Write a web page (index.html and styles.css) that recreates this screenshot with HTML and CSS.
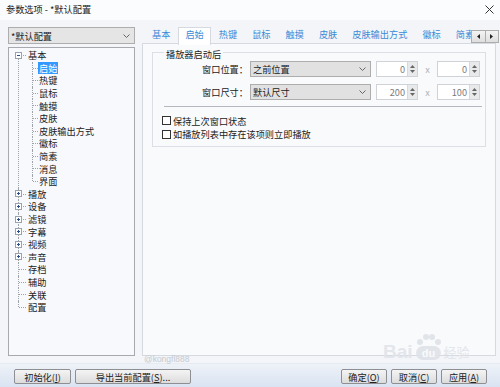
FILE: index.html
```html
<!DOCTYPE html>
<html>
  <head>
  <meta charset='UTF-8'>
  <title>参数选项</title>
    <link rel="stylesheet" href="styles.css">
  </head>
  <body>
    <div class="window">
      <div class="titlebar">
        <span class="title">参数选项 - *默认配置</span>
        <svg class="close" width="9" height="9" viewBox="0 0 9 9"><path d="M0.5 0.5L8.5 8.5M8.5 0.5L0.5 8.5" stroke="#333" stroke-width="1"/></svg>
      </div>

      <div class="main">
        <div class="side">
          <div class="combo">
            <span>*默认配置</span>
            <svg width="7" height="4" viewBox="0 0 7 4"><path d="M0.5 0.5L3.5 3.5L6.5 0.5" fill="none" stroke="#666"/></svg>
          </div>
          <div class="tree">
            <ul>
              <li class="root">
                <div class="row">
                  <svg class="twist" width="7" height="7" viewBox="0 0 7 7"><rect x="0.5" y="0.5" width="6" height="6" fill="#fff" stroke="#9aa2ac"/><path d="M2 3.5h3" stroke="#2d4f8e"/></svg>
                  <span class="label">基本</span>
                </div>
                <ul class="sub">
                  <li><div class="row"><span class="label sel">启始</span></div></li>
                  <li><div class="row"><span class="label">热键</span></div></li>
                  <li><div class="row"><span class="label">鼠标</span></div></li>
                  <li><div class="row"><span class="label">触摸</span></div></li>
                  <li><div class="row"><span class="label">皮肤</span></div></li>
                  <li><div class="row"><span class="label">皮肤输出方式</span></div></li>
                  <li><div class="row"><span class="label">徽标</span></div></li>
                  <li><div class="row"><span class="label">简素</span></div></li>
                  <li><div class="row"><span class="label">消息</span></div></li>
                  <li><div class="row"><span class="label">界面</span></div></li>
                </ul>
              </li>
              <li class="root"><div class="row"><svg class="twist" width="7" height="7" viewBox="0 0 7 7"><rect x="0.5" y="0.5" width="6" height="6" fill="#fff" stroke="#9aa2ac"/><path d="M2 3.5h3M3.5 2v3" stroke="#2d4f8e"/></svg><span class="label">播放</span></div></li>
              <li class="root"><div class="row"><svg class="twist" width="7" height="7" viewBox="0 0 7 7"><rect x="0.5" y="0.5" width="6" height="6" fill="#fff" stroke="#9aa2ac"/><path d="M2 3.5h3M3.5 2v3" stroke="#2d4f8e"/></svg><span class="label">设备</span></div></li>
              <li class="root"><div class="row"><svg class="twist" width="7" height="7" viewBox="0 0 7 7"><rect x="0.5" y="0.5" width="6" height="6" fill="#fff" stroke="#9aa2ac"/><path d="M2 3.5h3M3.5 2v3" stroke="#2d4f8e"/></svg><span class="label">滤镜</span></div></li>
              <li class="root"><div class="row"><svg class="twist" width="7" height="7" viewBox="0 0 7 7"><rect x="0.5" y="0.5" width="6" height="6" fill="#fff" stroke="#9aa2ac"/><path d="M2 3.5h3M3.5 2v3" stroke="#2d4f8e"/></svg><span class="label">字幕</span></div></li>
              <li class="root"><div class="row"><svg class="twist" width="7" height="7" viewBox="0 0 7 7"><rect x="0.5" y="0.5" width="6" height="6" fill="#fff" stroke="#9aa2ac"/><path d="M2 3.5h3M3.5 2v3" stroke="#2d4f8e"/></svg><span class="label">视频</span></div></li>
              <li class="root"><div class="row"><svg class="twist" width="7" height="7" viewBox="0 0 7 7"><rect x="0.5" y="0.5" width="6" height="6" fill="#fff" stroke="#9aa2ac"/><path d="M2 3.5h3M3.5 2v3" stroke="#2d4f8e"/></svg><span class="label">声音</span></div></li>
              <li class="root"><div class="row"><span class="twist"></span><span class="label">存档</span></div></li>
              <li class="root"><div class="row"><span class="twist"></span><span class="label">辅助</span></div></li>
              <li class="root"><div class="row"><span class="twist"></span><span class="label">关联</span></div></li>
              <li class="root"><div class="row"><span class="twist"></span><span class="label">配置</span></div></li>
            </ul>
          </div>
        </div>

        <div class="content">
          <div class="tabbar">
            <div class="tabs">
              <span class="tab">基本</span>
              <span class="tab active">启始</span>
              <span class="tab">热键</span>
              <span class="tab">鼠标</span>
              <span class="tab">触摸</span>
              <span class="tab">皮肤</span>
              <span class="tab">皮肤输出方式</span>
              <span class="tab">徽标</span>
              <span class="tab">简素</span>
            </div>
            <div class="tab-scroll">
              <span class="arrow"><svg width="3" height="5" viewBox="0 0 3 5"><path d="M3 0V5L0 2.5Z" fill="#222"/></svg></span>
              <span class="arrow"><svg width="3" height="5" viewBox="0 0 3 5"><path d="M0 0V5L3 2.5Z" fill="#222"/></svg></span>
            </div>
          </div>

          <div class="panel">
            <fieldset class="group">
              <legend>播放器启动后</legend>
              <div class="field-row">
                <span class="field-label">窗口位置：</span>
                <div class="select">
                  <span>之前位置</span>
                  <svg width="7" height="4" viewBox="0 0 7 4"><path d="M0.5 0.5L3.5 3.5L6.5 0.5" fill="none" stroke="#666"/></svg>
                </div>
                <div class="spin"><span class="spin-value">0</span><span class="spin-btns"><svg width="5" height="3" viewBox="0 0 5 3"><path d="M0 3H5L2.5 0Z" fill="#666"/></svg><svg width="5" height="3" viewBox="0 0 5 3"><path d="M0 0H5L2.5 3Z" fill="#666"/></svg></span></div>
                <span class="times">x</span>
                <div class="spin wide"><span class="spin-value">0</span><span class="spin-btns"><svg width="5" height="3" viewBox="0 0 5 3"><path d="M0 3H5L2.5 0Z" fill="#666"/></svg><svg width="5" height="3" viewBox="0 0 5 3"><path d="M0 0H5L2.5 3Z" fill="#666"/></svg></span></div>
              </div>
              <div class="field-row">
                <span class="field-label">窗口尺寸：</span>
                <div class="select">
                  <span>默认尺寸</span>
                  <svg width="7" height="4" viewBox="0 0 7 4"><path d="M0.5 0.5L3.5 3.5L6.5 0.5" fill="none" stroke="#666"/></svg>
                </div>
                <div class="spin"><span class="spin-value">200</span><span class="spin-btns"><svg width="5" height="3" viewBox="0 0 5 3"><path d="M0 3H5L2.5 0Z" fill="#666"/></svg><svg width="5" height="3" viewBox="0 0 5 3"><path d="M0 0H5L2.5 3Z" fill="#666"/></svg></span></div>
                <span class="times">x</span>
                <div class="spin wide"><span class="spin-value">100</span><span class="spin-btns"><svg width="5" height="3" viewBox="0 0 5 3"><path d="M0 3H5L2.5 0Z" fill="#666"/></svg><svg width="5" height="3" viewBox="0 0 5 3"><path d="M0 0H5L2.5 3Z" fill="#666"/></svg></span></div>
              </div>
              <div class="sep"></div>
              <label class="check"><span class="box"></span>保持上次窗口状态</label>
              <label class="check"><span class="box"></span>如播放列表中存在该项则立即播放</label>
            </fieldset>
          </div>
        </div>
      </div>

      <div class="footer">
        <div class="btns">
          <span class="btn init">初始化(<u>I</u>)</span>
          <span class="btn export">导出当前配置(<u>S</u>)...</span>
        </div>
        <div class="btns">
          <span class="btn ok">确定(<u>O</u>)</span>
          <span class="btn ok">取消(<u>C</u>)</span>
          <span class="btn ok">应用(<u>A</u>)</span>
        </div>
      </div>

      <span class="credit">@kongfl888</span>
      <div class="baidu">
        <span class="bai">Bai</span>
        <span class="paw">
          <svg width="30" height="30" viewBox="0 0 30 30">
            <circle cx="7" cy="10" r="3" fill="#dfe3e9"/>
            <circle cx="13" cy="5" r="3" fill="#dfe3e9"/>
            <circle cx="19" cy="5" r="3" fill="#dfe3e9"/>
            <circle cx="25" cy="10" r="3" fill="#dfe3e9"/>
            <rect x="3" y="14" width="25" height="14" rx="7" fill="#dfe3e9"/>
            <text x="15.5" y="25" font-size="11" font-weight="bold" font-family="Liberation Sans, sans-serif" fill="#fafbfd" text-anchor="middle">du</text>
          </svg>
        </span>
        <span class="jy">经验</span>
      </div>
    </div>
  </body>
</html>
```

FILE: styles.css
```css
* {
  box-sizing: border-box;
}
html, body {
  margin: 0;
  padding: 0;
}
body {
  width: 500px;
  height: 387px;
  overflow: hidden;
  font-family: "Noto Sans CJK SC", "Liberation Sans", sans-serif;
  font-size: 9.2px;
  color: #222;
  background: #f3f5f9;
}
.window {
  position: relative;
  width: 500px;
  height: 387px;
  display: flex;
  flex-direction: column;
}
.titlebar {
  height: 20px;
  display: flex;
  align-items: center;
  justify-content: space-between;
  padding: 0 6px 2px 6px;
  background: #fbfcfd;
}
.title {
  line-height: 12px;
}
.main {
  height: 343px;
  display: flex;
  gap: 7px;
  padding: 7px 1px 7px 8px;
}

/* left side */
.side {
  flex: none;
  width: 127px;
  display: flex;
  flex-direction: column;
}
.combo {
  height: 17px;
  border: 1px solid #adadad;
  background: #e5e5e5;
  display: flex;
  align-items: center;
  justify-content: space-between;
  padding: 0 4px 0 2px;
  line-height: 12px;
  margin-bottom: 3px;
}
.tree {
  flex: 1;
  border: 1px solid #a7a9ae;
  background: #f8f9fc;
  padding-top: 1px;
}
.tree ul {
  list-style: none;
  margin: 0;
  padding: 0;
}
.tree li {
  position: relative;
}
.tree .row {
  position: relative;
  display: flex;
  align-items: center;
  height: 12.6px;
  line-height: 12px;
  white-space: nowrap;
}
.root > .row {
  padding-left: 6px;
}
.root > .row::after {
  content: "";
  position: absolute;
  left: 10px;
  top: 6px;
  width: 7px;
  border-top: 1px dotted #9ea3aa;
}
.root::before {
  content: "";
  position: absolute;
  left: 9px;
  top: 0;
  bottom: 0;
  border-left: 1px dotted #9ea3aa;
}
.root:first-child::before {
  top: 6px;
}
.root:last-child::before {
  bottom: auto;
  height: 6px;
}
.twist {
  position: relative;
  z-index: 1;
  display: inline-block;
  width: 7px;
  height: 7px;
  margin-right: 5px;
  flex: none;
}
.sub > li::before {
  content: "";
  position: absolute;
  left: 23px;
  top: 0;
  bottom: 0;
  border-left: 1px dotted #9ea3aa;
}
.sub > li:last-child::before {
  bottom: auto;
  height: 6px;
}
.sub .row {
  padding-left: 29px;
}
.sub .row::after {
  content: "";
  position: absolute;
  left: 24px;
  top: 6px;
  width: 5px;
  border-top: 1px dotted #9ea3aa;
}
.label {
  padding: 0 1px;
}
.sel {
  background: #3399ff;
  color: #fff;
}

/* right side */
.content {
  flex: 1;
  min-width: 0;
  display: flex;
  flex-direction: column;
}
.tabbar {
  height: 16px;
  display: flex;
  align-items: flex-end;
}
.tabs {
  flex: 1;
  min-width: 0;
  display: flex;
  align-items: flex-end;
  overflow: hidden;
  padding-left: 2.5px;
  height: 18px;
  margin-bottom: -2px;
  position: relative;
  z-index: 1;
}
.tab {
  flex: none;
  padding: 0 7.5px;
  height: 16px;
  line-height: 10px;
  color: #3b8ad6;
  white-space: nowrap;
}
.tab.active {
  background: #fff;
  border: 1px solid #d6d9df;
  border-bottom: none;
  padding: 1px 6.5px 0;
  height: 18px;
}
.tab-scroll {
  flex: none;
  display: flex;
  width: 28px;
  height: 13px;
  align-self: flex-end;
}
.arrow {
  flex: 1;
  display: flex;
  align-items: center;
  justify-content: center;
  border: 1px solid #adadad;
  background: linear-gradient(#f4f4f4, #dedede);
}
.arrow + .arrow {
  border-left: none;
}
.panel {
  flex: 1;
  margin-right: 3px;
  border: 1px solid #d6d9df;
  background: #f9fafc;
  padding: 1px 9px 0 9px;
}
.group {
  margin: 0;
  border: 1px solid #dcdfe5;
  padding: 1px 2px 5px 9px;
  min-width: 0;
}
.group legend {
  padding: 3px 2px 0;
  margin-left: 2px;
  line-height: 12px;
}
.field-row {
  display: flex;
  align-items: center;
  height: 16px;
  margin-bottom: 7px;
}
.field-label {
  flex: none;
  width: 86px;
  text-align: right;
  line-height: 12px;
}
.select {
  flex: none;
  width: 121px;
  height: 16px;
  margin-left: 2px;
  border: 1px solid #adadad;
  background: #e1e1e1;
  display: flex;
  align-items: center;
  justify-content: space-between;
  padding: 0 4px 0 2px;
  line-height: 12px;
}
.spin {
  flex: none;
  width: 42px;
  height: 16px;
  margin-left: 5px;
  border: 1px solid #cfd2d7;
  background: #fff;
  display: flex;
}
.spin.wide {
  width: 43px;
  margin-left: 0;
}
.spin-value {
  flex: 1;
  text-align: right;
  padding-right: 2px;
  line-height: 14px;
  color: #7b7b7b;
}
.spin-btns {
  width: 10px;
  display: flex;
  flex-direction: column;
  align-items: center;
  justify-content: space-around;
  padding: 2px 0;
  background: #e8e9eb;
  border-left: 1px solid #d7d9dc;
}
.times {
  flex: none;
  width: 19px;
  text-align: center;
  color: #b0b3b8;
  line-height: 12px;
}
.sep {
  height: 1px;
  background: #b4b7bd;
  margin: -1px 1px 7px 2px;
}
.check {
  display: flex;
  align-items: center;
  height: 13.5px;
  line-height: 12px;
}
.box {
  width: 9px;
  height: 9px;
  border: 1px solid #333;
  background: #fff;
  margin-right: 2px;
}

/* footer */
.footer {
  flex: 1;
  display: flex;
  justify-content: space-between;
  align-items: flex-start;
  padding: 5px 13px 0 14px;
  border-top: 1px solid #e6ebf2;
  background: linear-gradient(#eef2f8, #d9e3f1);
}
.btns {
  display: flex;
  gap: 4px;
}
.btn {
  height: 15px;
  border: 1px solid #8d8f93;
  border-radius: 2px;
  background: linear-gradient(#f4f4f4, #dcdcdc);
  text-align: center;
  line-height: 12px;
  padding-top: 1px;
}
.btn u {
  text-underline-offset: 1px;
}
.init {
  width: 57px;
}
.export {
  width: 116px;
}
.ok {
  width: 46px;
}

/* watermarks */
.credit {
  position: absolute;
  left: 144px;
  top: 354px;
  font-family: "Liberation Sans", sans-serif;
  font-size: 8.5px;
  color: #c6c9ce;
}
.baidu {
  position: absolute;
  left: 383px;
  top: 332px;
  display: flex;
  align-items: flex-end;
  opacity: 0.9;
}
.bai {
  font-family: "Liberation Sans", sans-serif;
  font-weight: bold;
  font-size: 19px;
  line-height: 20px;
  color: #e1e4ea;
}
.paw {
  display: flex;
}
.jy {
  font-size: 13px;
  line-height: 16px;
  color: #e1e4ea;
  margin-left: 1px;
  margin-bottom: 2px;
}
```
